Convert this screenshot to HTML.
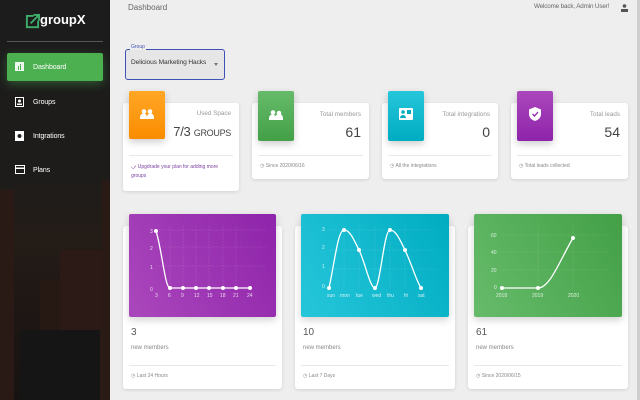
<!DOCTYPE html>
<html><head><meta charset="utf-8"><style>
*{box-sizing:border-box;margin:0;padding:0}
body{width:640px;height:400px;overflow:hidden;background:#eeeeee;font-family:"Liberation Sans",sans-serif;position:relative;color:#555}
.a{position:absolute}
#side{left:0;top:0;width:110px;height:400px;background:linear-gradient(180deg,#1c1c1c 0%,#1e1c1a 45%,#241c17 60%,#1f1714 75%,#171312 100%);overflow:hidden}
.bld{position:absolute;background:#2a1a15}
.nav{position:absolute;left:7px;width:96px;height:28px;color:#fff;font-size:7px;display:flex;align-items:center;padding-left:26px;letter-spacing:-.1px}
.nav svg{position:absolute;left:8px;top:9px}
.card{position:absolute;background:#fff;border-radius:3px;box-shadow:0 1px 3px rgba(0,0,0,.12)}
.ib{position:absolute;width:36px;height:48px;border-radius:2px;box-shadow:0 3px 8px rgba(0,0,0,.2)}
.t{position:absolute;right:8px;font-size:6.3px;color:#999;text-align:right}
.v{position:absolute;right:8px;font-size:14px;color:#444;text-align:right}
.dv{position:absolute;left:6px;right:6px;height:1px;background:#e8e8e8}
.ft{position:absolute;left:8px;font-size:5px;color:#888}
.ch{position:absolute;border-radius:2px;box-shadow:0 3px 8px rgba(0,0,0,.18)}
.cn{position:absolute;left:8px;font-size:10px;color:#555}
.cs{position:absolute;left:8px;font-size:6px;color:#888}
</style></head><body>
<div id="side" class="a">
<div class="bld" style="left:0;top:190px;width:14px;height:210px"></div>
<div class="bld" style="left:40px;top:280px;width:70px;height:120px;background:#261813"></div>
<div class="bld" style="left:60px;top:250px;width:50px;height:150px;background:#2b1a15"></div>
<div class="bld" style="left:102px;top:180px;width:8px;height:220px"></div>
<div class="a" style="left:20px;top:330px;width:80px;height:70px;background:#151515"></div>
<svg class="a" style="left:25px;top:13px" width="15" height="17" viewBox="0 0 16 18"><path d="M9 3H2v12h12V8" fill="none" stroke="#3fae6a" stroke-width="2"/><path d="M6 11L14 3M9 2h6v6" fill="none" stroke="#3fae6a" stroke-width="2"/></svg>
<div class="a" style="left:40px;top:12px;color:#fff;font-weight:bold;font-size:13px">groupX</div>
<div class="a" style="left:7px;top:41px;width:96px;height:1px;background:#555"></div>
<div class="nav" style="top:53px;background:#4caf50;border-radius:2px;box-shadow:0 3px 10px rgba(76,175,80,.4)"><svg width="9" height="9"><rect x="0" y="0" width="9" height="9" fill="#fff" opacity=".9"/><rect x="3" y="4" width="1" height="4" fill="#4caf50"/><rect x="5" y="2" width="1" height="6" fill="#4caf50"/></svg>Dashboard</div>
<div class="nav" style="top:88px"><svg width="9" height="10"><rect x="0.5" y="0.5" width="8" height="9" fill="none" stroke="#fff"/><circle cx="4.5" cy="4" r="1.5" fill="#fff"/><rect x="2" y="6.5" width="5" height="1.5" fill="#fff"/></svg>Groups</div>
<div class="nav" style="top:122px"><svg width="9" height="10"><rect x="0" y="0" width="9" height="10" fill="#fff"/><circle cx="4.5" cy="5" r="2" fill="#222"/></svg>Intgrations</div>
<div class="nav" style="top:156px"><svg width="10" height="9"><rect x="0.5" y="0.5" width="9" height="8" fill="none" stroke="#fff"/><rect x="0" y="2.5" width="10" height="1.5" fill="#fff"/></svg>Plans</div>
</div>
<div class="a" style="left:637px;top:0;width:3px;height:400px;background:#cfcfcf"></div>
<div class="a" style="left:128px;top:3px;font-size:8px;color:#666">Dashboard</div>
<div class="a" style="left:534px;top:3px;font-size:6.3px;color:#666;letter-spacing:-.15px">Welcome back, Admin User!</div>
<svg class="a" style="left:621px;top:4px" width="7" height="8"><circle cx="3.5" cy="2" r="1.8" fill="#555"/><rect x="0" y="5" width="7" height="3" fill="#555"/></svg>
<div class="a" style="left:125px;top:49px;width:100px;height:31px;background:#e6e6e6;border:1px solid #3f51b5;border-radius:3px"></div>
<div class="a" style="left:130px;top:44px;font-size:5px;color:#3f51b5;background:#eee;padding:0 1px">Group</div>
<div class="a" style="left:131px;top:59px;font-size:6.6px;color:#333;letter-spacing:-.1px">Delicious Marketing Hacks</div>
<div class="a" style="left:214px;top:63px;width:0;height:0;border-left:2.5px solid transparent;border-right:2.5px solid transparent;border-top:3px solid #777"></div>

<div class="card" style="left:123px;top:103px;width:116px;height:88px">
<div class="t" style="top:7px">Used Space</div><div class="v" style="top:21px;font-size:13px;letter-spacing:-.3px">7/3 <span style="font-size:9px">GROUPS</span></div>
<div class="dv" style="top:52px"></div><div class="ft" style="top:60px;width:88px;color:#7b3fa0;line-height:9px">⤻ Upgdrade your plan for adding more groups</div></div>
<div class="ib" style="left:129px;top:91px;background:linear-gradient(#ffa726,#fb8c00)"></div>
<div class="card" style="left:252px;top:103px;width:117px;height:76px">
<div class="t" style="top:8px">Total members</div><div class="v" style="top:21px">61</div>
<div class="dv" style="top:52px"></div><div class="ft" style="top:60px">◷ Since 2020/06/16</div></div>
<div class="ib" style="left:258px;top:91px;height:50px;background:linear-gradient(#66bb6a,#43a047)"></div>
<div class="card" style="left:382px;top:103px;width:116px;height:76px">
<div class="t" style="top:8px">Total integrations</div><div class="v" style="top:21px">0</div>
<div class="dv" style="top:52px"></div><div class="ft" style="top:60px">◷ All the integrations</div></div>
<div class="ib" style="left:388px;top:91px;height:50px;background:linear-gradient(#26c6da,#00acc1)"></div>
<div class="card" style="left:511px;top:103px;width:117px;height:76px">
<div class="t" style="top:8px">Total leads</div><div class="v" style="top:21px">54</div>
<div class="dv" style="top:52px"></div><div class="ft" style="top:60px">◷ Total leads collected</div></div>
<div class="ib" style="left:517px;top:91px;height:50px;background:linear-gradient(#ab47bc,#8e24aa)"></div>
<svg class="a" style="left:140px;top:109px" width="14" height="10"><circle cx="4" cy="2.5" r="2.3" fill="#fff"/><circle cx="10" cy="2.5" r="2.3" fill="#fff"/><path d="M0 10v-2a3 3 0 0 1 7 0v2zM7 10v-2a3 3 0 0 1 7 0v2z" fill="#fff"/></svg>
<svg class="a" style="left:269px;top:110px" width="14" height="10"><circle cx="4" cy="2.5" r="2.3" fill="#fff"/><circle cx="10" cy="3" r="2.3" fill="#fff"/><path d="M0 10v-2a3 3 0 0 1 7 0v2zM6 10v-2a3.5 3.5 0 0 1 8 0v2z" fill="#fff"/></svg>
<svg class="a" style="left:399px;top:108px" width="14" height="12"><rect width="14" height="12" rx="1" fill="#fff"/><circle cx="4" cy="4" r="1.8" fill="#00acc1"/><path d="M1 10a3 3 0 0 1 6 0z" fill="#00acc1"/><rect x="8" y="2" width="4" height="4" fill="#00acc1"/></svg>
<svg class="a" style="left:529px;top:107px" width="12" height="14"><path d="M6 0L12 2.5V7c0 3.5-2.6 6-6 7C2.6 13 0 10.5 0 7V2.5z" fill="#fff"/><path d="M3.5 7l2 2 3.5-4" fill="none" stroke="#8e24aa" stroke-width="1.3"/></svg>

<div class="card" style="left:123px;top:226px;width:159px;height:163px"><div class="cn" style="top:101px">3</div><div class="cs" style="top:119px">new members</div><div class="dv" style="top:139px"></div><div class="ft" style="top:147px">◷ Last 24 Hours</div></div>
<div class="card" style="left:295px;top:226px;width:160px;height:163px"><div class="cn" style="top:101px">10</div><div class="cs" style="top:119px">new members</div><div class="dv" style="top:139px"></div><div class="ft" style="top:147px">◷ Last 7 Days</div></div>
<div class="card" style="left:468px;top:226px;width:160px;height:163px"><div class="cn" style="top:101px">61</div><div class="cs" style="top:119px">new members</div><div class="dv" style="top:139px"></div><div class="ft" style="top:147px">◷ Since 2020/06/15</div></div>

<div class="ch" style="left:129px;top:214px;width:147px;height:103px;background:linear-gradient(60deg,#ab47bc,#8e24aa)"></div>
<div class="ch" style="left:301px;top:214px;width:148px;height:103px;background:linear-gradient(60deg,#26c6da,#00acc1)"></div>
<div class="ch" style="left:474px;top:214px;width:148px;height:103px;background:linear-gradient(60deg,#66bb6a,#43a047)"></div>

<svg class="a" style="left:0;top:0" width="640" height="400" font-family="Liberation Sans" font-size="5" fill="rgba(255,255,255,.8)">
<g stroke="rgba(255,255,255,.22)" stroke-width=".5" stroke-dasharray="1.5 1.5">
<path d="M156 230H265M156 247H265M156 266H265M170 226V288M183 226V288M196 226V288M209 226V288M223 226V288M236 226V288"/>
<path d="M329 230H437M329 250H437M329 269H437M344 226V288M359 226V288M375 226V288M390 226V288M405 226V288"/>
<path d="M502 235H610M502 252H610M502 270H610M538 226V288M573 226V288"/>
</g>
<text x="150" y="233">3</text><text x="150" y="250">2</text><text x="150" y="269">1</text><text x="150" y="291">0</text>
<text x="155" y="297">3</text><text x="168" y="297">6</text><text x="181" y="297">9</text><text x="194" y="297">12</text><text x="207" y="297">15</text><text x="220" y="297">18</text><text x="233" y="297">21</text><text x="247" y="297">24</text>
<path d="M156 231C162 250 165 288 170 288H250" fill="none" stroke="#fff" stroke-width="1.3"/>
<g fill="#fff"><circle cx="156" cy="231" r="2"/><circle cx="170" cy="288" r="2"/><circle cx="183" cy="288" r="2"/><circle cx="196" cy="288" r="2"/><circle cx="209" cy="288" r="2"/><circle cx="223" cy="288" r="2"/><circle cx="236" cy="288" r="2"/><circle cx="250" cy="288" r="2"/></g>
<text x="322" y="231">3</text><text x="322" y="249">2</text><text x="322" y="268">1</text><text x="322" y="288">0</text>
<text x="327" y="297">sun</text><text x="340" y="297">mon</text><text x="356" y="297">tue</text><text x="372" y="297">wed</text><text x="387" y="297">thu</text><text x="404" y="297">fri</text><text x="418" y="297">sat</text>
<path d="M329 288C335 260 338 230 344 230C350 230 354 240 359 250C365 262 370 288 375 288C380 288 384 230 390 230C396 230 400 240 405 250C412 265 416 280 421 288" fill="none" stroke="#fff" stroke-width="1.3"/>
<g fill="#fff"><circle cx="329" cy="288" r="2"/><circle cx="344" cy="230" r="2"/><circle cx="359" cy="250" r="2"/><circle cx="375" cy="288" r="2"/><circle cx="390" cy="230" r="2"/><circle cx="405" cy="250" r="2"/><circle cx="421" cy="288" r="2"/></g>
<text x="491" y="237">60</text><text x="491" y="254">40</text><text x="491" y="272">20</text><text x="494" y="289">0</text>
<text x="496" y="297">2018</text><text x="532" y="297">2019</text><text x="568" y="297">2020</text>
<path d="M502 288H538C550 288 560 260 573 238" fill="none" stroke="#fff" stroke-width="1.3"/>
<g fill="#fff"><circle cx="502" cy="288" r="2"/><circle cx="538" cy="288" r="2"/><circle cx="573" cy="238" r="2"/></g>
</svg>
</body></html>
